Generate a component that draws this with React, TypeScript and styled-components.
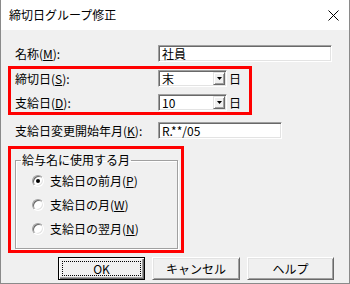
import { FC, ReactNode } from "react";
import styled, { createGlobalStyle } from "styled-components";

const GlobalStyle = createGlobalStyle`
    * {
        box-sizing: border-box;
    }
    html, body {
        margin: 0;
        padding: 0;
        background: #ffffff;
    }
    body {
        font-family: "Noto Sans CJK JP", "Noto Sans", sans-serif;
        font-size: 12px;
        color: #000000;
    }
`;

const Window = styled.div`
    width: 350px;
    height: 284px;
    background-color: #f0f0f0;
    border: 1px solid #8a8a8a;
    border-top: none;
    display: flex;
    flex-direction: column;
`;

const TitleBar = styled.div`
    flex: none;
    height: 30px;
    background-color: #ffffff;
    display: flex;
    align-items: center;
    justify-content: space-between;
    padding: 0 10px 0 8px;
`;

const Title = styled.div`
    font-size: 12px;
    line-height: 16px;
`;

const Body = styled.div`
    display: flex;
    flex-direction: column;
    padding: 15px 0 0 7px;
`;

const Row = styled.div<{ $inset: number; $top?: number }>`
    display: grid;
    grid-template-columns: 143px auto;
    align-items: center;
    height: 17px;
    padding-left: ${({ $inset }) => $inset}px;
    margin-top: ${({ $top }) => $top ?? 0}px;
`;

const Label = styled.span`
    line-height: 14px;
    white-space: nowrap;
    u {
        text-decoration: underline;
        text-underline-offset: 1px;
    }
`;

const RedFrame = styled.div`
    border: 3px solid #ff0000;
    display: flex;
    flex-direction: column;
`;

const FieldFrame = styled(RedFrame)`
    width: 244px;
    margin-top: 4px;
    padding: 1px 0 1px 0;
    gap: 7px;
`;

const GroupFrame = styled(RedFrame)`
    width: 176px;
    height: 107px;
    margin-top: 7px;
    padding: 4px 3px 1px 4px;
`;

const Sunken = styled.div`
    height: 17px;
    background-color: #ffffff;
    border: 1px solid;
    border-color: #a0a0a0 #ffffff #ffffff #a0a0a0;
    box-shadow: inset 1px 1px 0 #696969, inset -1px -1px 0 #e3e3e3;
    display: flex;
    align-items: center;
`;

const TextBox = styled(Sunken)<{ $width: number }>`
    width: ${({ $width }) => $width}px;
    padding: 0 3px;
    line-height: 13px;
`;

const ComboWrap = styled.div`
    display: flex;
    align-items: center;
`;

const Combo = styled(Sunken)`
    width: 69px;
    padding: 1px 1px 1px 3px;
`;

const ComboText = styled.span`
    flex: 1;
    line-height: 13px;
`;

const DropButton = styled.span`
    width: 12px;
    height: 13px;
    background-color: #f0f0f0;
    border: 1px solid;
    border-color: #e3e3e3 #696969 #696969 #e3e3e3;
    box-shadow: inset 1px 1px 0 #ffffff, inset -1px -1px 0 #a0a0a0;
    display: flex;
    align-items: center;
    justify-content: center;
`;

const Unit = styled.span`
    margin-left: 2px;
    line-height: 14px;
`;

const Group = styled.fieldset`
    margin: 0;
    height: 96px;
    padding: 0 0 0 5px;
    border: 1px solid #a0a0a0;
    box-shadow: inset 1px 1px 0 #ffffff, 1px 1px 0 #ffffff;
`;

const Legend = styled.legend`
    padding: 0 1px;
    line-height: 14px;
`;

const RadioList = styled.div`
    display: flex;
    flex-direction: column;
    gap: 10px;
    margin-top: 7px;
    padding-left: 11px;
`;

const RadioRow = styled.div`
    display: flex;
    align-items: center;
    gap: 6px;
    height: 14px;
    line-height: 14px;
    u {
        text-decoration: underline;
        text-underline-offset: 1px;
    }
`;

const RadioCircle = styled.span<{ $checked?: boolean }>`
    width: 12px;
    height: 12px;
    border-radius: 50%;
    background-color: #ffffff;
    border: 1px solid;
    border-color: #a0a0a0 #ffffff #ffffff #a0a0a0;
    box-shadow: inset 1px 1px 0 #696969, inset -1px -1px 0 #e3e3e3;
    display: flex;
    align-items: center;
    justify-content: center;
    &::after {
        content: "";
        width: 4px;
        height: 4px;
        border-radius: 50%;
        background-color: ${({ $checked }) => ($checked ? "#000000" : "transparent")};
    }
`;

const ButtonRow = styled.div`
    display: flex;
    justify-content: flex-end;
    gap: 7px;
    margin-top: 4px;
    padding-right: 15px;
`;

const Button = styled.button<{ $width?: number; $default?: boolean }>`
    width: ${({ $width }) => $width ?? 87}px;
    height: 23px;
    padding: 0;
    font: inherit;
    color: #000000;
    background-color: #f0f0f0;
    border: 1px solid;
    border-color: ${({ $default }) => ($default ? "#000000" : "#ffffff #696969 #696969 #ffffff")};
    box-shadow: ${({ $default }) =>
        $default
            ? "inset 1px 1px 0 #ffffff, inset -1px -1px 0 #696969, inset -2px -2px 0 #a0a0a0"
            : "inset 1px 1px 0 #e3e3e3, inset -1px -1px 0 #a0a0a0"};
    outline: ${({ $default }) => ($default ? "1px dotted #000000" : "none")};
    outline-offset: -5px;
    line-height: 14px;
`;

const CloseIcon: FC = () => (
    <svg width="11" height="11" viewBox="0 0 11 11">
        <path d="M0.5 0.5L10.5 10.5M10.5 0.5L0.5 10.5" stroke="#000" strokeWidth="1" fill="none" />
    </svg>
);

const ArrowIcon: FC = () => (
    <svg width="5" height="3" viewBox="0 0 5 3">
        <path d="M0 0H5L2.5 3Z" fill="#000" />
    </svg>
);

const ComboField: FC<{ value: string }> = ({ value }) => (
    <ComboWrap>
        <Combo>
            <ComboText>{value}</ComboText>
            <DropButton>
                <ArrowIcon />
            </DropButton>
        </Combo>
        <Unit>日</Unit>
    </ComboWrap>
);

const Radio: FC<{ checked?: boolean; children: ReactNode }> = ({ checked, children }) => (
    <RadioRow>
        <RadioCircle $checked={checked} />
        <span>{children}</span>
    </RadioRow>
);

const App: FC = () => {
    return (
        <>
            <GlobalStyle />
            <Window>
                <TitleBar>
                    <Title>締切日グループ修正</Title>
                    <CloseIcon />
                </TitleBar>
                <Body>
                    <Row $inset={7}>
                        <Label>名称(<u>M</u>):</Label>
                        <TextBox $width={174}>社員</TextBox>
                    </Row>
                    <FieldFrame>
                        <Row $inset={4}>
                            <Label>締切日(<u>S</u>):</Label>
                            <ComboField value="末" />
                        </Row>
                        <Row $inset={4}>
                            <Label>支給日(<u>D</u>):</Label>
                            <ComboField value="10" />
                        </Row>
                    </FieldFrame>
                    <Row $inset={7} $top={7}>
                        <Label>支給日変更開始年月(<u>K</u>):</Label>
                        <TextBox $width={124}>R.**/05</TextBox>
                    </Row>
                    <GroupFrame>
                        <Group>
                            <Legend>給与名に使用する月</Legend>
                            <RadioList>
                                <Radio checked>支給日の前月(<u>P</u>)</Radio>
                                <Radio>支給日の月(<u>W</u>)</Radio>
                                <Radio>支給日の翌月(<u>N</u>)</Radio>
                            </RadioList>
                        </Group>
                    </GroupFrame>
                    <ButtonRow>
                        <Button $default>OK</Button>
                        <Button $width={88}>キャンセル</Button>
                        <Button>ヘルプ</Button>
                    </ButtonRow>
                </Body>
            </Window>
        </>
    );
};

export default App;
